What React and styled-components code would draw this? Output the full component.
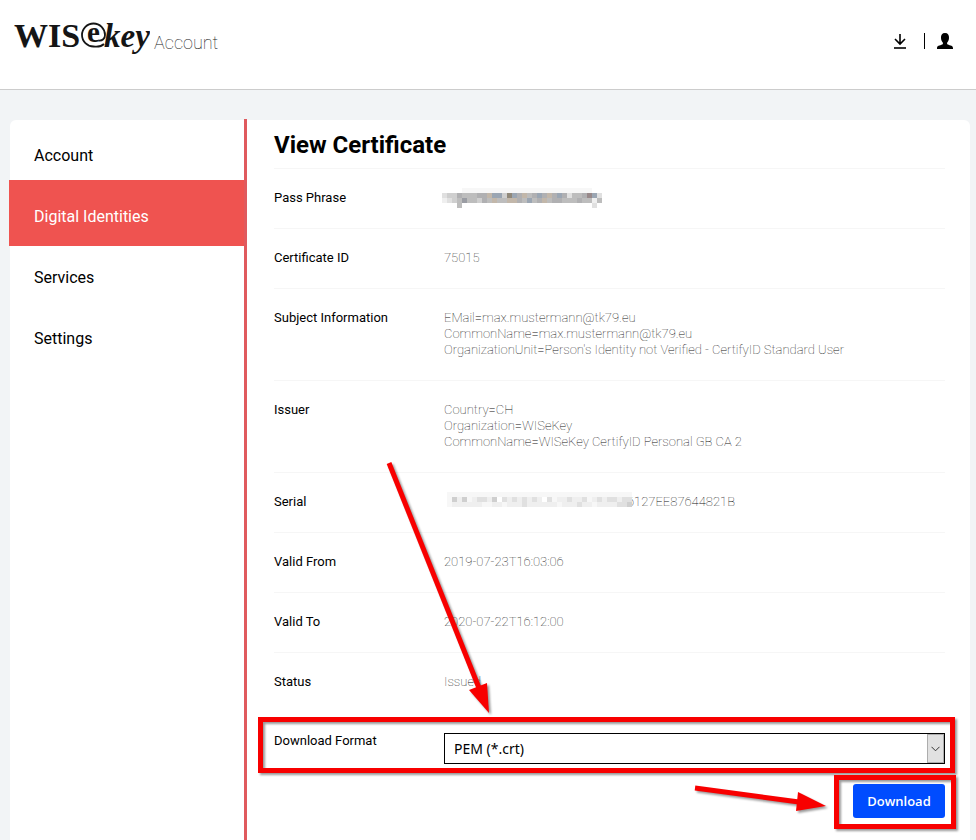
import React from 'react';
import styled, { createGlobalStyle } from 'styled-components';

const GlobalStyle = createGlobalStyle`
  * {
    box-sizing: border-box;
  }

  body {
    margin: 0;
    background: #f2f4f6;
    color: #000;
    font-family: Roboto, 'Liberation Sans', sans-serif;
    font-size: 13px;
    line-height: 16px;
  }
`;

const Page = styled.div`
  display: flex;
  flex-direction: column;
  min-height: 100vh;
`;

const Header = styled.header`
  display: flex;
  justify-content: space-between;
  padding: 16px 23px 29px 10px;
  background: #fff;
  border-bottom: 1px solid #ccc;
`;

const Brand = styled.a`
  display: flex;
  align-items: center;
  color: #151515;
  text-decoration: none;
`;

const BrandSuffix = styled.span`
  margin: 10px 0 0 4px;
  font-size: 18px;
  line-height: 24px;
  font-weight: 100;
`;

const HeaderActions = styled.div`
  display: flex;
  align-items: center;
  padding-top: 6px;
`;

const IconButton = styled.button`
  display: flex;
  padding: 0;
  border: 0;
  background: none;
  color: #000;
`;

const Separator = styled.span`
  width: 1px;
  height: 16px;
  margin: 0 12px 0 17px;
  background: #000;
`;

const Card = styled.div`
  display: flex;
  flex: 1;
  margin: 30px 6px 0 10px;
  background: #fff;
  border-radius: 6px 6px 0 0;
`;

const Sidebar = styled.nav`
  flex: 0 0 238px;
  margin: -1px 0 0 -1px;
  border-right: 3px solid #e05a5e;
`;

const NavItem = styled.a`
  display: block;
  margin-bottom: -5px;
  padding: 27px 25px 19px;
  font-size: 16px;
  line-height: 20px;
  text-decoration: none;
  color: ${({ $active }) => ($active ? '#fff' : '#000')};
  background: ${({ $active }) => ($active ? '#ef5350' : 'transparent')};
`;

const Content = styled.main`
  flex: 1;
  min-width: 0;
  padding: 9px 25px 22px 27px;
`;

const Title = styled.h1`
  margin: 0 0 7px;
  font-size: 24px;
  line-height: 32px;
  font-weight: 700;
`;

const Details = styled.dl`
  margin: 0;
`;

const Row = styled.div`
  display: grid;
  grid-template-columns: 170px 1fr;
  padding: 21px 0 22px;
  border-top: 1px solid #f6f6f6;
`;

const FormatRow = styled(Row)`
  position: relative;
  padding-bottom: 20px;
  border-top: 0;
`;

const Term = styled.dt`
  font-weight: 400;
`;

const Value = styled.dd`
  display: flex;
  flex-direction: column;
  margin: 0;
  font-weight: 100;
  color: #111;
`;

const MaskedValue = styled.span`
  display: flex;
`;

const MaskSvg = styled.svg`
  position: relative;
  flex: none;
  margin: -2px -5px -2px -2px;
`;

const SelectBox = styled.div`
  position: relative;
  height: 31px;
`;

const Select = styled.select`
  display: block;
  width: 100%;
  height: 100%;
  padding: 0 28px 0 9px;
  border: 1px solid #000;
  border-radius: 0;
  background: #fff;
  color: #000;
  appearance: none;
  font-family: 'Noto Sans', sans-serif;
  font-size: 14px;
`;

const SelectArrow = styled.span`
  position: absolute;
  top: 1px;
  right: 1px;
  bottom: 1px;
  display: flex;
  align-items: center;
  justify-content: center;
  width: 17px;
  background: #e1e1e1;
  border: 1px solid #adadad;
  pointer-events: none;
`;

const Actions = styled.div`
  display: flex;
  justify-content: flex-end;
`;

const ButtonWrap = styled.div`
  position: relative;
`;

const DownloadButton = styled.button`
  display: block;
  width: 92px;
  height: 34px;
  padding: 0;
  border: 0;
  border-radius: 3px;
  background: #004cff;
  color: #fff;
  font-family: 'Open Sans', sans-serif;
  font-size: 13px;
  font-weight: 600;
`;

const Highlight = styled.span`
  position: absolute;
  inset: ${({ $inset }) => $inset};
  border: 5px solid #f80000;
  filter: drop-shadow(2px 2px 1px rgba(0, 0, 0, 0.4));
  pointer-events: none;
`;

const ArrowSvg = styled.svg`
  position: absolute;
  left: ${({ $left }) => $left};
  top: ${({ $top }) => $top};
  overflow: visible;
  filter: drop-shadow(2px 2px 1px rgba(0, 0, 0, 0.4));
  pointer-events: none;
`;

const navItems = ['Account', 'Digital Identities', 'Services', 'Settings'];

// one character per 5px cell, see maskColors
const passPhraseMask = [
  '....11111111111111111111111111..',
  '344655566tbb4nb6t56b6t6b63556rb3',
  '2345755465t55tt65b56t56655565525',
  '...5..........................3.',
];

const serialMask = [
  '.1111111111111111111111111111111111111',
  '.1424123324.32323232.31223223123233233',
  '.1222222112212223222222122232212222334',
  '......................................',
];

const maskColors = {
  1: '#f7f7f7',
  2: '#efefef',
  3: '#e0e0e0',
  4: '#cfcfcf',
  5: '#bdbdbd',
  6: '#b0b0b2',
  7: '#9a9ca3',
  b: '#9ba6b3',
  t: '#c2b7aa',
  n: '#90887a',
  r: '#98898a',
};

const details = [
  { label: 'Pass Phrase', mask: passPhraseMask, lines: [] },
  { label: 'Certificate ID', lines: ['75015'] },
  {
    label: 'Subject Information',
    lines: [
      'EMail=max.mustermann@tk79.eu',
      'CommonName=max.mustermann@tk79.eu',
      "OrganizationUnit=Person's Identity not Verified - CertifyID Standard User",
    ],
  },
  {
    label: 'Issuer',
    lines: ['Country=CH', 'Organization=WISeKey', 'CommonName=WISeKey CertifyID Personal GB CA 2'],
  },
  { label: 'Serial', mask: serialMask, lines: ['6127EE87644821B'] },
  { label: 'Valid From', lines: ['2019-07-23T16:03:06'] },
  { label: 'Valid To', lines: ['2020-07-22T16:12:00'] },
  { label: 'Status', lines: ['Issued'] },
];

const Logo = () => (
  <svg width="140" height="44" viewBox="0 0 140 44" fill="#151515" role="img" aria-label="WISeKey">
    <g fontFamily="'Liberation Serif', serif" fontWeight="700">
      <text x="4" y="31" fontSize="34">WIS</text>
      <text x="77" y="26" fontSize="29">e</text>
      <text x="94" y="31" fontSize="33" fontStyle="italic">key</text>
    </g>
    <path
      d="M94 28C91 31 87 31 83.500 30.500A11.500 11.500 0 1 1 95 19C95 22.500 92.500 25 88.500 24.500"
      fill="none"
      stroke="#151515"
      strokeWidth="1.800"
    />
  </svg>
);

const Mask = ({ rows }) => (
  <MaskSvg width={rows[0].length * 5} height="20" shapeRendering="crispEdges" aria-hidden="true">
    {rows.map((row, y) =>
      [...row].map((cell, x) =>
        maskColors[cell] ? (
          <rect key={`${x}-${y}`} x={x * 5} y={y * 5} width="5" height="5" fill={maskColors[cell]} />
        ) : null
      )
    )}
  </MaskSvg>
);

const Arrow = ({ left, top, width, height, line, head }) => (
  <ArrowSvg $left={left} $top={top} width={width} height={height} aria-hidden="true">
    <path d={line} stroke="#f80000" strokeWidth="5" />
    <path d={head} fill="#f80000" />
  </ArrowSvg>
);

const DetailRow = ({ label, mask, lines }) => (
  <Row>
    <Term>{label}</Term>
    <Value>
      {mask ? (
        <MaskedValue>
          <Mask rows={mask} />
          {lines[0]}
        </MaskedValue>
      ) : (
        lines.map((line) => <span key={line}>{line}</span>)
      )}
    </Value>
  </Row>
);

const App = () => (
  <>
    <GlobalStyle />
    <Page>
      <Header>
        <Brand href="#">
          <Logo />
          <BrandSuffix>Account</BrandSuffix>
        </Brand>
        <HeaderActions>
          <IconButton aria-label="Downloads">
            <svg width="14" height="16" viewBox="0 0 14 16" fill="none" stroke="#000" strokeWidth="1.600">
              <path d="M7 1v9.500M2 6l5 5 5-5" />
              <path d="M1 15h12" />
            </svg>
          </IconButton>
          <Separator />
          <IconButton aria-label="Profile">
            <svg width="16" height="16" viewBox="0 0 16 16">
              <path d="M8 0C5 0 3.800 2 4 5c.1 2 .9 3.800 1.900 4.700v1.400C4.500 12.700 0 12 0 15.200V16h16v-.8c0-3.200-4.500-2.500-5.900-4.100V9.700C11.100 8.800 11.900 7 12 5c.2-3-1-5-4-5z" />
            </svg>
          </IconButton>
        </HeaderActions>
      </Header>
      <Card>
        <Sidebar>
          {navItems.map((item) => (
            <NavItem key={item} href="#" $active={item === 'Digital Identities'}>
              {item}
            </NavItem>
          ))}
        </Sidebar>
        <Content>
          <Title>View Certificate</Title>
          <Details>
            {details.map((detail) => (
              <DetailRow key={detail.label} {...detail} />
            ))}
            <FormatRow>
              <Term>
                <label htmlFor="format">Download Format</label>
              </Term>
              <Value>
                <SelectBox>
                  <Select id="format" defaultValue="pem">
                    <option value="pem">PEM (*.crt)</option>
                  </Select>
                  <SelectArrow>
                    <svg width="9" height="6" viewBox="0 0 9 6" fill="none" stroke="#333">
                      <path d="M.5 .8l4 4 4-4" />
                    </svg>
                  </SelectArrow>
                </SelectBox>
              </Value>
              <Highlight $inset="5px -10px 11px -16px" />
              <Arrow
                left="114px"
                top="-250px"
                width="104"
                height="254"
                line="M1 1L91 226"
                head="M81 228l18-7 2 30z"
              />
            </FormatRow>
          </Details>
          <Actions>
            <ButtonWrap>
              <DownloadButton type="button">Download</DownloadButton>
              <Highlight $inset="-9px -11px -11px -19px" />
              <Arrow
                left="-158px"
                top="2px"
                width="132"
                height="28"
                line="M0 2l104 14"
                head="M103 6l28 14-30 5z"
              />
            </ButtonWrap>
          </Actions>
        </Content>
      </Card>
    </Page>
  </>
);

export default App;
